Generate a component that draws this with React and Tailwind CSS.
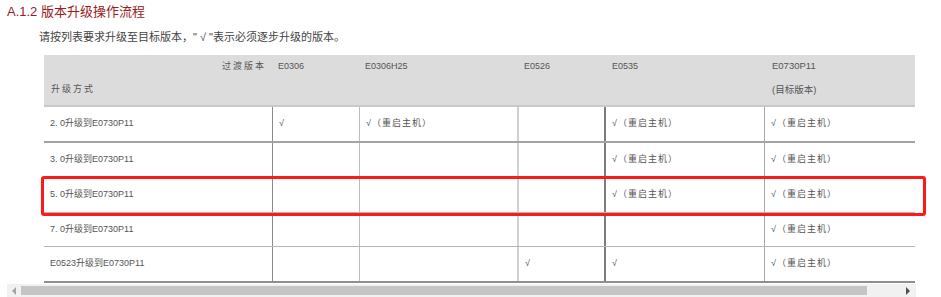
import React from "react";

const rows = [
  ["2. 0升级到E0730P11", "√", "√（重启主机）", "", "√（重启主机）", "√（重启主机）"],
  ["3. 0升级到E0730P11", "", "", "", "√（重启主机）", "√（重启主机）"],
  ["5. 0升级到E0730P11", "", "", "", "√（重启主机）", "√（重启主机）"],
  ["7. 0升级到E0730P11", "", "", "", "", "√（重启主机）"],
  ["E0523升级到E0730P11", "", "", "√", "√", "√（重启主机）"],
];

const rowBorders = [
  "border-b-2 border-[#a3a3a3]",
  "border-b border-[#b5b5b5]",
  "border-b border-[#b5b5b5]",
  "border-b border-[#b5b5b5]",
  "border-b-2 border-[#8f8f8f]",
];

const rowHeights = ["h-[36px]", "h-[34px]", "h-[36px]", "h-[34px]", "h-[36px]"];

const colBorders = [
  "border-r border-[#8a8a8a]",
  "border-r border-[#bdbdbd]",
  "border-r-2 border-[#d0d0d0]",
  "border-r-2 border-[#7c7c7c]",
  "border-r border-[#a8a8a8]",
  "",
];

const colW = ["w-[229px]", "w-[87px]", "w-[159px]", "w-[87px]", "w-[159px]", "w-[150px]"];

export default function App() {
  return (
    <div
      className="w-[941px] h-[297px] bg-white overflow-hidden text-[#555]"
      style={{ fontFamily: '"Liberation Sans", "Noto Sans CJK SC", sans-serif' }}
    >
      <div className="pl-[7px] pt-[4px] text-[13px] leading-[16px] text-[#9b1b1b]">
        A.1.2 版本升级操作流程
      </div>
      <div className="pl-[39px] mt-[10px] text-[11px] leading-[14px] text-[#444]">
        请按列表要求升级至目标版本，" √ "表示必须逐步升级的版本。
      </div>
      <div className="relative ml-[44px] mt-[11px] w-[871px]">
        <div className="flex h-[52px] bg-[#dddcdd] border-b-2 border-[#c9c9c9] text-[9px]">
          <div className="w-[229px] flex flex-col pt-[5px]">
            <div className="text-right pr-[7px] tracking-[2px] leading-[12px]">过渡版本</div>
            <div className="pl-[7px] mt-[11px] tracking-[2px] leading-[12px]">升级方式</div>
          </div>
          <div className="w-[87px] pl-[5px] pt-[5px] leading-[12px]">E0306</div>
          <div className="w-[159px] pl-[5px] pt-[5px] leading-[12px]">E0306H25</div>
          <div className="w-[87px] pl-[5px] pt-[5px] leading-[12px]">E0526</div>
          <div className="w-[159px] pl-[6px] pt-[5px] leading-[12px]">E0535</div>
          <div className="w-[150px] pl-[7px] pt-[5px] leading-[12px] text-[9.5px]">
            <div>E0730P11</div>
            <div className="mt-[12px]">(目标版本)</div>
          </div>
        </div>
        {rows.map((r, i) => (
          <div key={i} className={`flex ${rowHeights[i]} ${rowBorders[i]} text-[9px]`}>
            {r.map((c, j) => (
              <div
                key={j}
                className={`${colW[j]} ${colBorders[j]} shrink-0 flex items-center pl-[6px]`}
              >
                <span className={j === 0 ? "" : "tracking-[1px]"}>{c}</span>
              </div>
            ))}
          </div>
        ))}
        <div className="absolute left-[-3px] top-[121px] w-[885px] h-[40px] border-[3px] border-[#ff1a1a] rounded-[3px]" />
      </div>
      <div className="ml-[7px] mt-[1px] w-[909px] h-[13px] bg-[#f1f1f1] flex items-center">
        <div className="w-[14px] flex justify-center">
          <div className="w-0 h-0 border-y-[4px] border-y-transparent border-r-[4px] border-r-[#a3a3a3]" />
        </div>
        <div className="w-[846px] h-[9px] bg-[#c5c5c5]" />
        <div className="flex-1 flex justify-end pr-[6px]">
          <div className="w-0 h-0 border-y-[4px] border-y-transparent border-l-[4px] border-l-[#505050]" />
        </div>
      </div>
    </div>
  );
}
